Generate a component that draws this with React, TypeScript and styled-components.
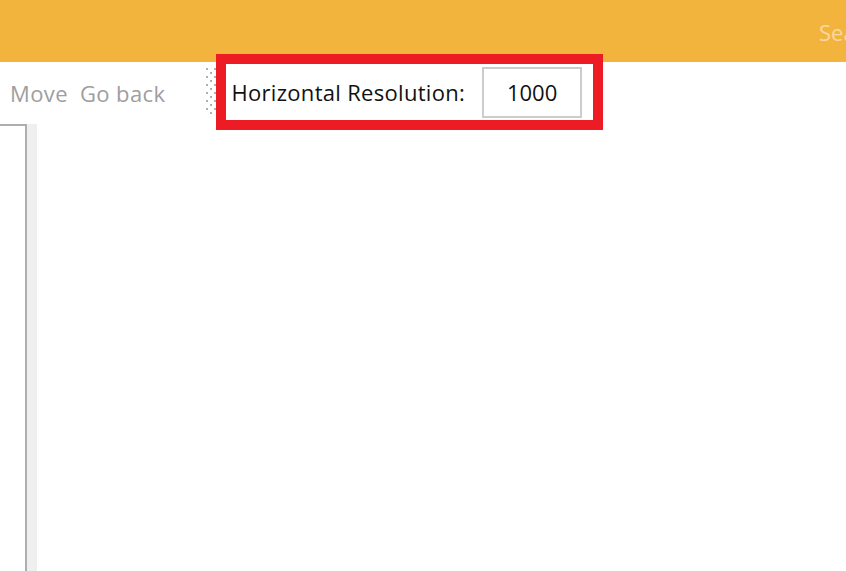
import React from "react";
import styled, { createGlobalStyle } from "styled-components";

const Global = createGlobalStyle`
  html, body { margin: 0; padding: 0; background: #ffffff; }
  body { font-family: "Open Sans", "Noto Sans", sans-serif; overflow: hidden; }
`;

const Page = styled.div`
  width: 846px;
  height: 571px;
  display: flex;
  flex-direction: column;
  overflow: hidden;
  background: #ffffff;
`;

const Header = styled.header`
  height: 62px;
  flex: none;
  background: #f3b43d;
  display: flex;
  align-items: center;
  padding-left: 819px;
  overflow: hidden;
`;

const SearchHint = styled.span`
  font-size: 22px;
  color: #f9d9a0;
  white-space: nowrap;
  margin-top: 2px;
`;

const Toolbar = styled.div`
  height: 62px;
  flex: none;
  display: flex;
  align-items: center;
  padding-left: 10px;
`;

const ToolButton = styled.span`
  font-size: 22px;
  color: #9e9e9e;
  margin-right: 12px;
  white-space: nowrap;
  letter-spacing: 0.4px;
`;

const Grip = styled.div`
  width: 10px;
  height: 48px;
  margin-left: 28px;
  margin-top: -2px;
  background-image:
    radial-gradient(circle at 1px 1px, #b0b0b0 1.3px, transparent 1.4px),
    radial-gradient(circle at 5px 5px, #b0b0b0 1.3px, transparent 1.4px);
  background-size: 8px 8px, 8px 8px;
`;

const Field = styled.div`
  position: relative;
  display: flex;
  align-items: center;
  gap: 17px;
  padding: 0 11px 0 6px;
  height: 56px;
  margin-left: 10px;
  margin-top: -2px;
`;

const Highlight = styled.div`
  position: absolute;
  left: -10px;
  top: -10px;
  right: -10px;
  bottom: -10px;
  border: 10px solid #ed1c24;
  pointer-events: none;
`;

const Label = styled.label`
  font-size: 22px;
  color: #111111;
  white-space: nowrap;
  letter-spacing: 0.3px;
`;

const NumberBox = styled.div`
  width: 96px;
  height: 47px;
  border: 2px solid #cccccc;
  display: flex;
  align-items: center;
  justify-content: center;
  font-size: 22px;
  color: #111111;
`;

const Body = styled.div`
  flex: 1;
  display: flex;
  min-height: 0;
`;

const SidePanel = styled.div`
  width: 25px;
  border-top: 2px solid #adadb2;
  border-right: 2px solid #adadb2;
`;

const Scrollbar = styled.div`
  width: 10px;
  background: #efefef;
`;

const Canvas = styled.main`
  flex: 1;
  background: #ffffff;
`;

export default function App() {
  return (
    <Page>
      <Global />
      <Header>
        <SearchHint>Search</SearchHint>
      </Header>
      <Toolbar>
        <ToolButton>Move</ToolButton>
        <ToolButton>Go back</ToolButton>
        <Grip />
        <Field>
          <Label>Horizontal Resolution:</Label>
          <NumberBox>1000</NumberBox>
          <Highlight />
        </Field>
      </Toolbar>
      <Body>
        <SidePanel />
        <Scrollbar />
        <Canvas />
      </Body>
    </Page>
  );
}
